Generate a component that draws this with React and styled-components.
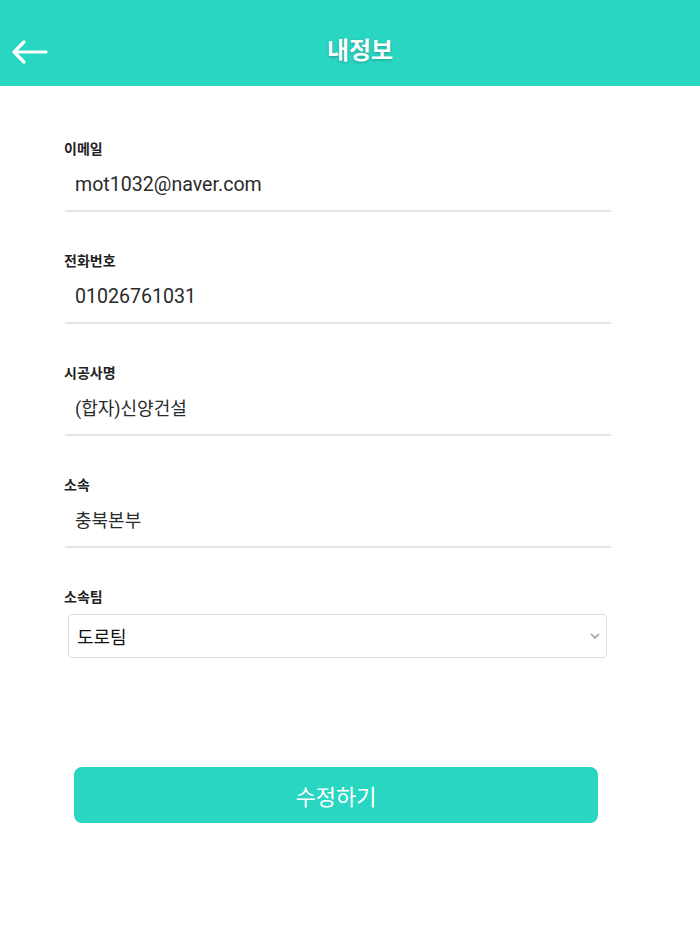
import React from 'react'
import styled, { createGlobalStyle } from 'styled-components'

const GlobalStyle = createGlobalStyle`
  html, body {
    margin: 0;
    padding: 0;
    background: #fff;
    font-family: Roboto, "Noto Sans CJK KR", sans-serif;
  }
`

const fields = [
  { label: '이메일', value: 'mot1032@naver.com', latin: true },
  { label: '전화번호', value: '01026761031', latin: true },
  { label: '시공사명', value: '(합자)신양건설' },
  { label: '소속', value: '충북본부' },
]

function App() {
  return (
    <Page>
      <GlobalStyle />
      <Header>
        <BackButton aria-label="back">
          <svg width="38" height="26" viewBox="0 0 38 26" fill="none" stroke="#fff" strokeWidth="3.2" strokeLinecap="round" strokeLinejoin="round">
            <path d="M35 13H4" />
            <path d="M13 3L3 13l10 10" />
          </svg>
        </BackButton>
        <Title>내정보</Title>
      </Header>

      <Form>
        {fields.map((f) => (
          <Field key={f.label}>
            <Label>{f.label}</Label>
            <Value $latin={f.latin}>{f.value}</Value>
          </Field>
        ))}
        <Field>
          <Label>소속팀</Label>
          <Select defaultValue="도로팀">
            <option>도로팀</option>
          </Select>
        </Field>
      </Form>

      <SubmitButton>수정하기</SubmitButton>
    </Page>
  )
}

const Page = styled.div`
  width: 700px;
  min-height: 934px;
  background: #fff;
`

const Header = styled.header`
  height: 86px;
  background: #29d6c2;
  display: flex;
  align-items: center;
  justify-content: center;
  position: relative;
`

const BackButton = styled.div`
  position: absolute;
  left: 11px;
  top: 39px;
  display: flex;
`

const Title = styled.h1`
  margin: 0 0 0 20px;
  padding-top: 10px;
  color: #fff;
  font-size: 24px;
  font-weight: 700;
  text-shadow: 0 1px 3px rgba(0, 0, 0, 0.25);
  font-family: "Noto Sans CJK KR", sans-serif;
`

const Form = styled.div`
  padding: 50px 89px 0 64px;
  display: flex;
  flex-direction: column;
  gap: 36px;
`

const Field = styled.div`
  display: flex;
  flex-direction: column;
`

const Label = styled.div`
  font-size: 14px;
  font-weight: 700;
  color: #222;
  line-height: 24px;
  font-family: "Noto Sans CJK KR", sans-serif;
`

const Value = styled.div`
  margin-left: 1px;
  padding: 12px 0 12px 10px;
  font-size: ${(p) => (p.$latin ? '19.6px' : '18px')};
  line-height: 26px;
  color: #2a2a2a;
  border-bottom: 2px solid #e4e4e4;
`

const Select = styled.select`
  margin: 6px 4px 0 4px;
  height: 44px;
  padding: 0 8px;
  font-size: 18px;
  color: #111;
  background: #fff;
  border: 1px solid #dcdcdc;
  border-radius: 4px;
  appearance: none;
  background-image: url("data:image/svg+xml;utf8,<svg xmlns='http://www.w3.org/2000/svg' width='10' height='6' viewBox='0 0 10 6'><path d='M1 1l4 4 4-4' fill='none' stroke='%23999' stroke-width='1.5'/></svg>");
  background-repeat: no-repeat;
  background-position: right 6px center;
  font-family: "Noto Sans CJK KR", sans-serif;
`

const SubmitButton = styled.button`
  display: block;
  margin: 109px 0 0 74px;
  width: 524px;
  height: 56px;
  border: none;
  border-radius: 8px;
  background: #29d6c2;
  color: #fff;
  font-size: 22px;
  font-family: "Noto Sans CJK KR", sans-serif;
  cursor: pointer;
`

export default App
